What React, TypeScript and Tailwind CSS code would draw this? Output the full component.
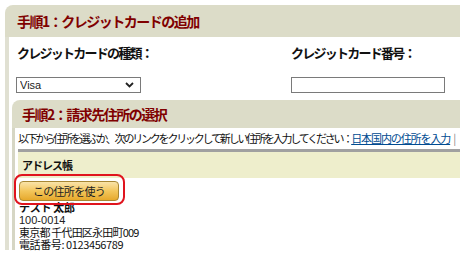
import React from 'react';

// Checkout step panels (credit card + billing address)
const App: React.FC = () => {
  return (
    <div className="w-[460px] h-[258px] overflow-hidden bg-white pt-[5px] pl-[5px] font-['Noto_Sans_CJK_JP','Liberation_Sans',sans-serif] text-[#111]">
      {/* Step 1 */}
      <div className="flex flex-col">
        <div className="h-[32px] bg-[#dcdcc8] rounded-tl-[8px] flex items-center pl-[12px]">
          <h2 className="text-[14px] leading-none font-bold text-[#800000] tracking-[-1.5px]">手順1：クレジットカードの追加</h2>
        </div>

        <div className="border-l-[4px] border-[#e0e0d2] pl-[3px] flex flex-col">
          <div className="flex pl-[4px] pt-[8px]">
            <div className="w-[275px] flex flex-col">
              <label className="text-[13px] leading-[15px] font-bold tracking-[-1.75px] pl-[1px]">クレジットカードの種類：</label>
              <div className="mt-[17px] relative w-[125px] h-[16px]">
                <select className="block appearance-none w-full h-[16px] border border-[#7a7a7a] bg-white text-[11px] leading-[14px] py-0 pl-[3px] font-['Liberation_Sans',sans-serif] text-[#222] outline-none">
                  <option>Visa</option>
                </select>
                <svg className="absolute right-[7px] top-[5px] pointer-events-none" width="9" height="6" viewBox="0 0 9 6">
                  <path d="M1 1 L4.5 4.5 L8 1" stroke="#222" strokeWidth="1.8" fill="none" />
                </svg>
              </div>
            </div>
            <div className="flex flex-col">
              <label className="text-[13px] leading-[15px] font-bold tracking-[-1.75px]">クレジットカード番号：</label>
              <input type="text" className="block mt-[17px] w-[154px] h-[16px] border border-[#7a7a7a] bg-white outline-none" />
            </div>
          </div>

          {/* Step 2 */}
          <div className="mt-[7px] flex flex-col">
            <div className="h-[28px] bg-[#dcdcc8] rounded-tl-[8px] flex items-center pl-[10px]">
              <h2 className="text-[14px] leading-none font-bold text-[#800000] tracking-[-1.5px]">手順2：請求先住所の選択</h2>
            </div>
            <div className="border-l-[3px] border-[#d6d6c4] flex flex-col">
              <div className="h-[20px] flex items-center pl-[3px] text-[11px] leading-none whitespace-nowrap">
                <span className="tracking-[-2.2px]">以下から住所を選ぶか、次のリンクをクリックして新しい住所を入力してください：</span>
                <a href="#" className="text-[#004b91] underline tracking-[-1.1px]">日本国内の住所を入力</a>
                <span className="ml-[3px] text-[#888]">|</span>
              </div>
              <div className="mt-[1px] ml-[3px] h-[3px] bg-[#a0a0a0]" />
              <div className="ml-[3px] h-[26px] bg-[#eeeecc] flex items-center pl-[4px]">
                <span className="text-[11px] leading-none font-bold tracking-[-1px]">アドレス帳</span>
              </div>

              <div className="ml-[4px] flex flex-col">
                <div className="relative mt-[3px] w-[100px] h-[20px]">
                  <button className="w-full h-full rounded-[4px] border border-[#a88734] bg-gradient-to-b from-[#f9e3a8] via-[#f3c65a] to-[#e6a92a] text-[11px] leading-none text-[#222] tracking-[-0.7px] flex items-center justify-center">
                    この住所を使う
                  </button>
                  <div className="absolute left-[-5px] right-[-6px] top-[-7px] bottom-[-4px] rounded-[8px] border-2 border-[#e0141e] pointer-events-none" />
                </div>
                <div className="text-[11px] leading-[12px] flex flex-col">
                  <span className="font-bold tracking-[-0.3px]">テスト 太郎</span>
                  <span className="mt-[1px] font-['Liberation_Sans',sans-serif] text-[#222]">100-0014</span>
                  <span className="tracking-[-0.8px]">東京都 千代田区永田町009</span>
                  <span className="tracking-[-0.4px]">電話番号: 0123456789</span>
                </div>
              </div>
            </div>
          </div>
        </div>
      </div>
    </div>
  );
};

export default App;
